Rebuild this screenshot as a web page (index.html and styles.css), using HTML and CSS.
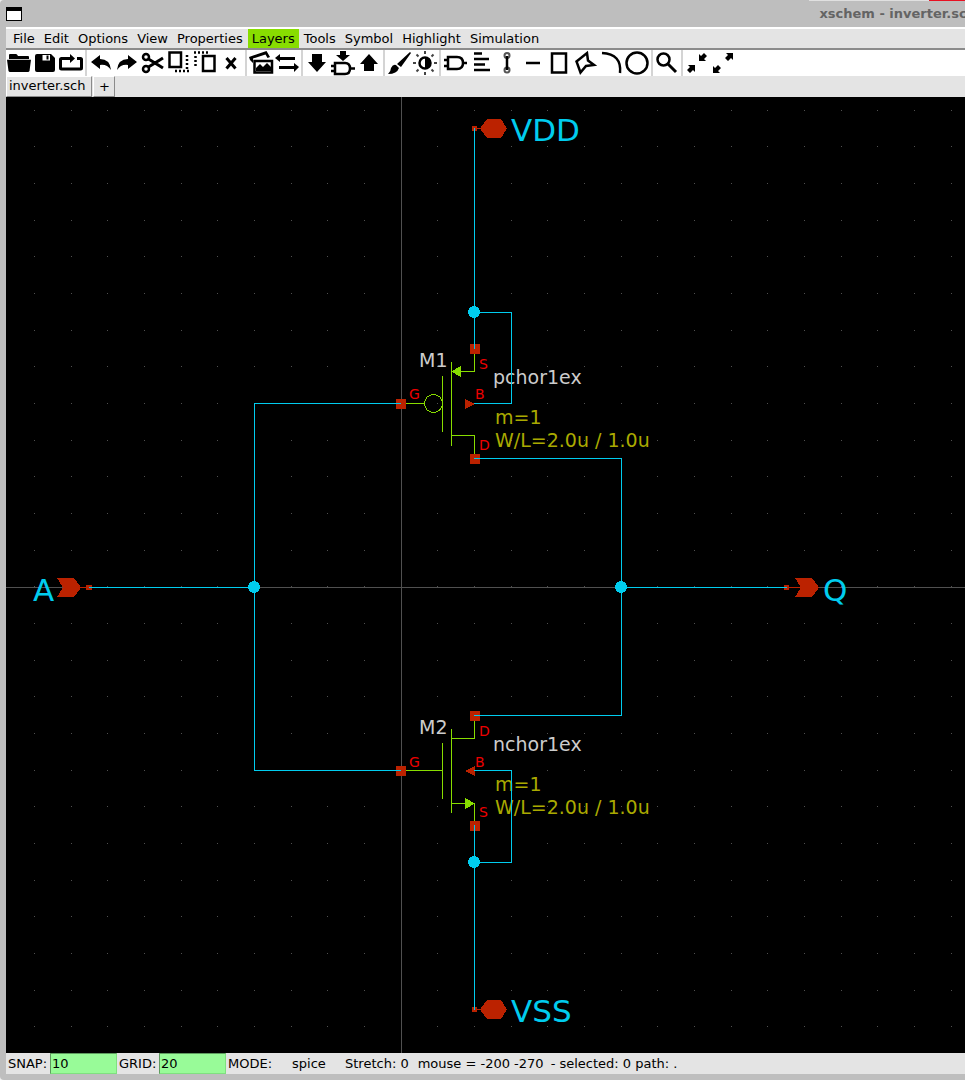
FILE: index.html
```html
<!DOCTYPE html>
<html lang="en">
<head>
<meta charset="utf-8">
<title>xschem - inverter.sch</title>
<link rel="stylesheet" href="styles.css">
</head>
<body>
<div class="window">
  <header class="titlebar">
    <button class="window-menu" aria-label="Window menu"></button>
    <h1 class="title">xschem - inverter.sch</h1>
    <div class="behind"></div>
  </header>
  <nav class="menubar">
    <button>File</button>
    <button>Edit</button>
    <button>Options</button>
    <button>View</button>
    <button>Properties</button>
    <button class="active">Layers</button>
    <button>Tools</button>
    <button>Symbol</button>
    <button>Highlight</button>
    <button>Simulation</button>
  </nav>
  <div class="toolbar">
    <button aria-label="Open"><svg viewBox="0 0 26 26"><path class="f" d="M3 9V5Q3 4 4 4H10Q11 4 12 6H22Q23 6 23 7V9ZM1 9.700H25L23.500 21Q23 22 22 22H4Q3 22 2.500 21Z"/></svg></button>
    <button aria-label="Save"><svg viewBox="0 0 26 26"><path class="f" fill-rule="evenodd" d="M5 4H19L23 8V20Q23 22 21 22H5Q3 22 3 20V6Q3 4 5 4ZM10.500 5V10.500H18V5Z"/><path class="f" d="M14.500 5.500H16.500V9.500H14.500Z"/></svg></button>
    <button aria-label="Reload"><svg viewBox="0 0 26 26"><path class="s3" d="M13 8.500H3.500Q2.500 8.500 2.500 9.500V18Q2.500 19 3.500 19H22.500Q23.500 19 23.500 18V9.500Q23.500 8.500 22.500 8.500H19"/><path class="f" d="M12 4L17 8.500L12 13Z"/></svg></button>
    <i class="sep"></i>
    <button aria-label="Undo"><svg viewBox="0 0 26 26"><path class="f" d="M3 12L12 5V9Q22 9 23 20Q19 14 12 15V19Z"/></svg></button>
    <button aria-label="Redo"><svg viewBox="0 0 26 26"><path class="f" d="M23 12L14 5V9Q4 9 3 20Q7 14 14 15V19Z"/></svg></button>
    <button aria-label="Cut"><svg viewBox="0 0 26 26"><circle class="s2" cx="6" cy="7" r="3"/><circle class="s2" cx="6" cy="19" r="3"/><path class="s3" d="M8.500 9L23 18M8.500 17L23 8"/></svg></button>
    <button aria-label="Copy"><svg viewBox="0 0 26 26"><path class="s2" d="M3.500 2.500H15V17H3.500Z"/><path class="dots" d="M9 21H23M21 5V19"/></svg></button>
    <button aria-label="Paste"><svg viewBox="0 0 26 26"><path class="s2" d="M11 6H22.500V21H11Z"/><path class="dots" d="M2 2.500H17M3.500 6V18"/></svg></button>
    <button aria-label="Delete"><svg viewBox="0 0 26 26"><path class="s3" d="M8.500 8L17.500 18.500M17.500 8L8.500 18.500"/></svg></button>
    <i class="sep"></i>
    <button aria-label="Duplicate"><svg viewBox="0 0 26 26"><path class="s2" d="M6.500 11H24V22.500H6.500Z"/><path class="f" d="M1 7L18.500 1L22 7L19.500 8L17.500 4.500L5 8.500V13L2 10ZM8 21V18L12 14L15 17L19 13L23 17V21Z"/></svg></button>
    <button aria-label="Swap"><svg viewBox="0 0 26 26"><path class="f" d="M1 8L6 4V7H21V10H6V12ZM25 17L20 13V16H5V19H20V22Z"/></svg></button>
    <i class="sep"></i>
    <button aria-label="Push schematic"><svg viewBox="0 0 26 26"><path class="f" d="M8 4H18V12H22L13 22L4 12H8Z"/></svg></button>
    <button aria-label="Push symbol"><svg viewBox="0 0 26 26"><path class="f" d="M10 1H16V5H20L13 11L6 5H10Z"/><path class="s2" d="M5 13H15Q20 13 20 18.500Q20 24 15 24H5ZM1 16H5M1 21H5M20 18.500H25"/></svg></button>
    <button aria-label="Pop"><svg viewBox="0 0 26 26"><path class="f" d="M8 21H18V14H22L13 4L4 14H8Z"/></svg></button>
    <i class="sep"></i>
    <button aria-label="Colours"><svg viewBox="0 0 26 26"><path class="f" d="M24 2L25 3L15 17L11 14ZM10 15L13 18Q11 24 2 24Q5 21 5 18Q7 14 10 15Z"/></svg></button>
    <button aria-label="Light or dark"><svg viewBox="0 0 26 26"><circle class="s2" cx="13" cy="13" r="5.500"/><path class="f" d="M13 7A6 6 0 0 1 13 19Z"/><path class="s2 rays" d="M13 1V4M13 22V25M1 13H4M22 13H25M4.500 4.500L6.500 6.500M19.500 19.500L21.500 21.500M4.500 21.500L6.500 19.500M19.500 6.500L21.500 4.500"/></svg></button>
    <i class="sep"></i>
    <button aria-label="Insert symbol"><svg viewBox="0 0 26 26"><path class="s2" d="M6 7H15Q21 7 21 13Q21 19 15 19H6ZM2 10H6M2 16H6M21 13H25"/></svg></button>
    <button aria-label="Insert text"><svg viewBox="0 0 26 26"><path class="s2" d="M6 3.500H14M6 9H21M6 14.500H17M6 20H22"/></svg></button>
    <button aria-label="Insert wire"><svg viewBox="0 0 26 26"><circle class="g" cx="13" cy="5.500" r="2.500"/><circle class="g" cx="13" cy="20" r="2.500"/><path class="s2" d="M13 6V20"/></svg></button>
    <button aria-label="Insert line"><svg viewBox="0 0 26 26"><path class="s2" d="M6 13H20"/></svg></button>
    <button aria-label="Insert rectangle"><svg viewBox="0 0 26 26"><path class="s2" d="M6 3.500H20V22.500H6Z"/></svg></button>
    <button aria-label="Insert polygon"><svg viewBox="0 0 26 26"><path class="s2" d="M4.500 11.500L15 3L16 10.500L22 15L14 16L8.500 22.500Z"/></svg></button>
    <button aria-label="Insert arc"><svg viewBox="0 0 26 26"><path class="s2" d="M4 3Q24 4 22 23"/></svg></button>
    <button aria-label="Insert circle"><svg viewBox="0 0 26 26"><circle class="s2" cx="13" cy="13" r="10.500"/></svg></button>
    <i class="sep"></i>
    <button aria-label="Zoom box"><svg viewBox="0 0 26 26"><circle class="s2" cx="9.500" cy="9.500" r="6"/><path class="s3" d="M14 14L22 22"/></svg></button>
    <i class="sep"></i>
    <button aria-label="Zoom full"><svg viewBox="0 0 26 26"><path class="f" d="M4 15H11V22L9 20L6 23L3 20L6 17ZM22 11H15V4L17 6L20 3L23 6L20 9Z"/></svg></button>
    <button aria-label="Zoom fit"><svg viewBox="0 0 26 26"><path class="f" d="M23 3H16L18 5L15 8L18 11L21 8L23 10ZM3 23H10L8 21L11 18L8 15L5 18L3 16Z"/></svg></button>
  </div>
  <div class="tabs">
    <button class="tab">inverter.sch</button>
    <button class="tab add">+</button>
  </div>
  <main class="schematic">
    <svg class="drawing" role="img" aria-label="Inverter schematic">
      <defs>
        <pattern id="grid" x="28" y="13" width="110" height="110" patternUnits="userSpaceOnUse">
          <path class="grid-dot" d="M0 0h1v1h-1zM37 0h1v1h-1zM73 0h1v1h-1zM0 36h1v1h-1zM37 36h1v1h-1zM73 36h1v1h-1zM0 73h1v1h-1zM37 73h1v1h-1zM73 73h1v1h-1z"/>
        </pattern>
      </defs>
      <rect width="100%" height="100%" fill="url(#grid)"/>
      <rect class="axis" x="395" y="0" width="1" height="100%"/>
      <rect class="axis" x="0" y="490" width="100%" height="1"/>
      <g transform="translate(-6 -97)">
        <g class="label">
          <text x="419" y="367">M1</text>
          <text x="493" y="384">pchor1ex</text>
          <text x="419" y="734">M2</text>
          <text x="493" y="751">nchor1ex</text>
        </g>
        <g class="value">
          <text x="495" y="424">m=1</text>
          <text x="495" y="447">W/L=2.0u / 1.0u</text>
          <text x="495" y="791">m=1</text>
          <text x="495" y="814">W/L=2.0u / 1.0u</text>
        </g>
        <g class="device">
          <path d="M406 403.500H424M442.500 376V432M451.500 362V446M474.500 354V371.500H460M451 435.500H474.500V454"/>
          <circle cx="433.500" cy="403.500" r="9"/>
          <path class="tip" d="M451 371.500L461 366V377Z"/>
          <path d="M406 770.500H442.500M442.500 743V799M451.500 729V813M451 738.500H474.500V721M451 803.500H474.500V821"/>
          <path class="tip" d="M475 803.500L465 798V809Z"/>
        </g>
        <g class="pin">
          <path d="M470 344h10v10h-10zM396 399h10v10h-10zM470 454h10v10h-10zM470 711h10v10h-10zM396 766h10v10h-10zM470 821h10v10h-10z"/>
          <path d="M465 399L475 404L465 409ZM475 766V776L465 771Z"/>
          <path d="M472 126h5v5h-5zM476 128h6v1h-6zM480 128.500L487 119H501L507 128.500L501 138H487Z"/>
          <path d="M472 1007h5v5h-5zM476 1009h6v1h-6zM480 1009.500L487 1000H501L507 1009.500L501 1019H487Z"/>
          <path d="M86 585h6v5h-6zM79 587h8v1h-8zM57 578H74L81 587.500L74 597H57L63 587.500Z"/>
          <path d="M784 585h5v5h-5zM788 587h14v1h-14zM795 578H812L819 587.500L812 597H795L801 587.500Z"/>
        </g>
        <g class="pin-name">
          <text x="479" y="369">S</text><text x="409" y="399">G</text><text x="475" y="399">B</text><text x="479" y="450">D</text>
          <text x="479" y="736">D</text><text x="409" y="767">G</text><text x="475" y="767">B</text><text x="479" y="817">S</text>
        </g>
        <g class="wire">
          <path d="M474.500 128V349M474 312.500H511.500V403.500H474M401 403.500H254.500V770.500H401M474 458.500H621.500V715.500H474M89 587.500H254M621 587.500H787M474 770.500H511.500V862.500H474M474.500 825V1010"/>
          <circle cx="474" cy="312" r="6"/><circle cx="254" cy="587" r="6"/><circle cx="621" cy="587" r="6"/><circle cx="474" cy="862" r="6"/>
        </g>
        <g class="port">
          <text x="511" y="141">VDD</text>
          <text x="511" y="1022">VSS</text>
          <text x="33" y="601">A</text>
          <text x="823" y="601">Q</text>
        </g>
      </g>
    </svg>
  </main>
  <footer class="status">
    <label for="snap">SNAP:</label><input id="snap" value="10">
    <label for="gridsize">GRID:</label><input id="gridsize" value="20">
    <span class="mode">MODE:</span><span class="netlist">spice</span>
    <span class="stretch">Stretch: 0</span>
    <span class="mouse">mouse = -200 -270</span>
    <span>- selected: 0 path: .</span>
  </footer>
</div>
</body>
</html>
```
FILE: styles.css
```css
* { box-sizing: border-box; }
body {
  margin: 0;
  background: #eeeeee;
  color: #000;
  font: 13px/19px "DejaVu Sans", sans-serif;
}
button, input { font: inherit; color: inherit; border: 0; padding: 0; margin: 0; background: none; }
.window {
  display: flex;
  flex-direction: column;
  height: 100vh;
  overflow: hidden;
  padding: 0 0 6px 6px;
  background: #bebebe;
  border-radius: 4px 0 0 4px;
}
.titlebar { display: flex; align-items: center; justify-content: space-between; height: 27px; flex: none; position: relative; overflow: hidden; }
.window-menu { width: 16px; height: 14px; flex: none; background: #fff; border: 1px solid #000; border-top-width: 4px; }
.title { margin: 0 -11px 0 0; font-size: 13px; font-weight: bold; color: #646464; white-space: nowrap; }
.behind { position: absolute; top: 0; right: 0; width: 156px; height: 1px; background: #e0e0e0; border-right: 36px solid #e81123; }
.menubar { display: flex; flex: none; gap: 1px; padding-left: 3px; background: #e4e4e4; border-top: 2px solid #fff; border-bottom: 2px solid #8b8b8b; }
.menubar button { padding: 0 4px; height: 19px; line-height: 19px; }
.menubar .active { background: #88dd00; }
.toolbar { display: flex; flex: none; height: 26px; background: #fff; overflow: hidden; }
.toolbar button { width: 26px; height: 26px; flex: none; }
.toolbar svg { display: block; width: 26px; height: 26px; }
.sep { flex: none; width: 2px; margin: 0 1px; background: #d4d4d4; }
.f { fill: #000; }
.s2, .s3, .dots { fill: none; stroke: #000; stroke-width: 2.5; }
.s3 { stroke-width: 3; }
.g { fill: none; stroke: #555; stroke-width: 2; }
.rays { stroke: #444; stroke-width: 2; }
.dots { stroke-dasharray: 2 2; }
.tabs { display: flex; flex: none; height: 21px; background: #e4e4e4; }
.tab { height: 21px; padding: 0 6px 3px 2px; border: 1px solid #fff; border-right-color: #8b8b8b; border-bottom-color: #8b8b8b; line-height: 17px; }
.tab + .tab { margin-left: 1px; }
.tab.add { width: 22px; padding: 0; }
.schematic { flex: 1; min-height: 0; background: #000; }
.drawing { display: block; width: 100%; height: 100%; shape-rendering: crispEdges; }
.grid-dot { fill: #505050; }
.axis { fill: #505050; }
.label { fill: #cccccc; font-size: 19px; }
.value { fill: #aaaa00; font-size: 19px; }
.pin-name { fill: #ee0000; font-size: 14px; }
.port { fill: #00ccee; font-size: 31px; }
.device { fill: none; stroke: #88dd00; }
.device .tip { fill: #88dd00; stroke: none; }
.pin { fill: #bb2200; }
.wire path { fill: none; stroke: #00ccee; }
.wire circle { fill: #00ccee; }
.status { display: flex; flex: none; align-items: center; height: 21px; padding-left: 2px; background: #e4e4e4; white-space: nowrap; overflow: hidden; }
.status label { width: 42px; }
.status input { width: 67px; height: 21px; padding: 0 1px; margin-right: 2px; background: #98fb98; border: 1px solid #7fe07f; border-top-color: #5f9a5f; border-left-color: #5f9a5f; }
.status label + input + label { width: 40px; }
.mode { width: 64px; }
.netlist { width: 53px; }
.stretch { margin-right: 9px; }
.mouse { margin-right: 7px; }
```
